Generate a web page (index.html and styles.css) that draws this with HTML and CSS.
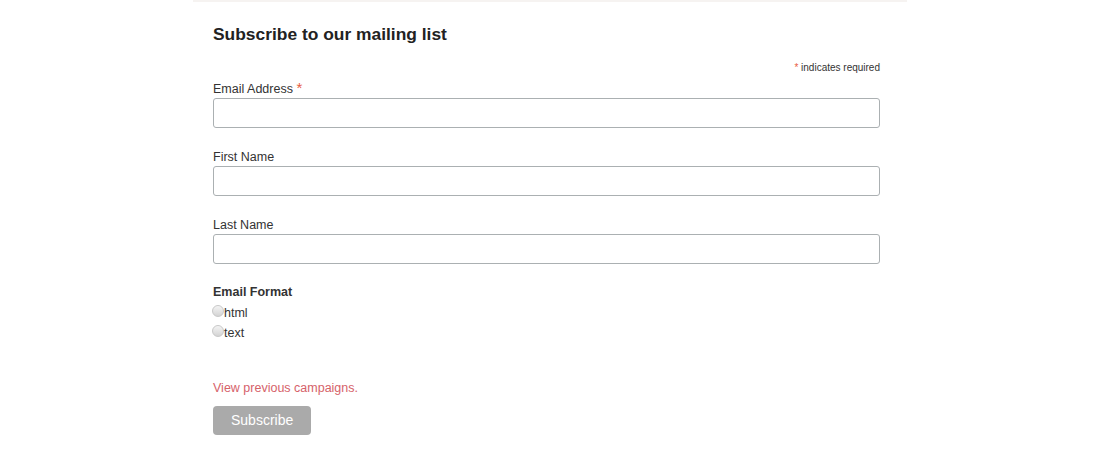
FILE: index.html
```html
<!DOCTYPE html>
<html lang="en">
<head>
<meta charset="utf-8">
<title>Subscribe</title>
<link rel="stylesheet" href="styles.css">
</head>
<body>
<div class="page">
  <div class="topline"></div>
  <form class="signup">
    <h2 class="title">Subscribe to our mailing list</h2>
    <div class="required"><span class="asterisk">*</span> indicates required</div>
    <div class="field">
      <label class="label" for="email">Email Address <span class="asterisk big">*</span></label>
      <input class="input" type="email" id="email">
    </div>
    <div class="field">
      <label class="label" for="fname">First Name</label>
      <input class="input" type="text" id="fname">
    </div>
    <div class="field">
      <label class="label" for="lname">Last Name</label>
      <input class="input" type="text" id="lname">
    </div>
    <div class="format">
      <div class="format-title">Email Format</div>
      <div class="radio-row"><input class="radio" type="radio" name="fmt" id="fhtml"><label for="fhtml">html</label></div>
      <div class="radio-row"><input class="radio" type="radio" name="fmt" id="ftext"><label for="ftext">text</label></div>
    </div>
    <a class="campaigns" href="#">View previous campaigns.</a>
    <button class="button" type="button">Subscribe</button>
  </form>
</div>
</body>
</html>
```
FILE: styles.css
```css
html, body {
  margin: 0;
  padding: 0;
  background: #ffffff;
}
body {
  font-family: "Liberation Sans", Arial, Helvetica, sans-serif;
  color: #333333;
}
.page {
  width: 714px;
  margin: 0 auto;
}
.topline {
  height: 2px;
  background: #f6f3f1;
}
.signup {
  padding: 0 27px 20px 20px;
}
.title {
  margin: 20px 0 0;
  font-size: 17.4px;
  line-height: 24px;
  font-weight: bold;
  color: #222222;
}
.required {
  margin-top: 15px;
  text-align: right;
  font-size: 10px;
  line-height: 14px;
  color: #333333;
}
.asterisk {
  color: #e85c41;
}
.asterisk.big {
  font-size: 15px;
  line-height: 10px;
}
.field {
  margin-top: 21px;
}
.required + .field {
  margin-top: 6px;
}
.label {
  display: block;
  font-size: 12.5px;
  line-height: 16px;
  margin-bottom: 1px;
}
.input {
  display: block;
  box-sizing: border-box;
  width: 100%;
  height: 30px;
  margin: 0;
  border: 1px solid #abb0b2;
  border-radius: 3px;
  background: #fff;
  padding: 0 8px;
}
.format {
  margin-top: 20px;
}
.format-title {
  font-size: 12.5px;
  line-height: 16px;
  font-weight: bold;
  margin-bottom: 3px;
}
.radio-row {
  font-size: 12.5px;
  line-height: 20px;
}
.radio {
  appearance: none;
  -webkit-appearance: none;
  display: inline-block;
  vertical-align: baseline;
  box-sizing: border-box;
  width: 12px;
  height: 12px;
  margin: 0 0 0 -1px;
  border: 1px solid #c8c8c8;
  border-radius: 50%;
  background: linear-gradient(#f4f4f4, #d4d4d4);
}
.campaigns {
  display: block;
  margin-top: 37px;
  font-size: 12.5px;
  line-height: 16px;
  color: #d6626a;
  text-decoration: none;
}
.button {
  display: block;
  margin-top: 10px;
  height: 29px;
  padding: 0 18px;
  border: 0;
  border-radius: 4px;
  background: #aaaaaa;
  color: #ffffff;
  font-family: "Liberation Sans", Arial, Helvetica, sans-serif;
  font-size: 14px;
  line-height: 29px;
}
```
